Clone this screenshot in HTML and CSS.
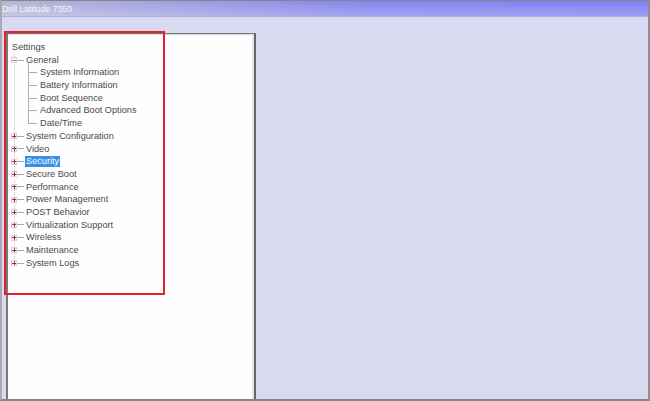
FILE: index.html
```html
<!DOCTYPE html>
<html>
<head>
<meta charset="utf-8">
<link rel="stylesheet" href="styles.css">
</head>
<body>
<div class="window">
  <div class="titlebar"><span class="title">Dell Latitude 7350</span></div>
  <div class="main">
    <div class="panel">
      <div class="tree">
        <div class="root">Settings</div>
        <div class="nodes">
          <div class="node open">
            <div class="row"><span class="box minus"></span><span class="hline"></span><span class="label">General</span></div>
            <div class="children">
              <div class="child"><span class="stub"></span><span class="label">System Information</span></div>
              <div class="child"><span class="stub"></span><span class="label">Battery Information</span></div>
              <div class="child"><span class="stub"></span><span class="label">Boot Sequence</span></div>
              <div class="child"><span class="stub"></span><span class="label">Advanced Boot Options</span></div>
              <div class="child last"><span class="stub"></span><span class="label">Date/Time</span></div>
            </div>
          </div>
          <div class="row"><span class="box"></span><span class="hline"></span><span class="label">System Configuration</span></div>
          <div class="row"><span class="box"></span><span class="hline"></span><span class="label">Video</span></div>
          <div class="row"><span class="box"></span><span class="hline"></span><span class="label selected">Security</span></div>
          <div class="row"><span class="box"></span><span class="hline"></span><span class="label">Secure Boot</span></div>
          <div class="row"><span class="box"></span><span class="hline"></span><span class="label">Performance</span></div>
          <div class="row"><span class="box"></span><span class="hline"></span><span class="label">Power Management</span></div>
          <div class="row"><span class="box"></span><span class="hline"></span><span class="label">POST Behavior</span></div>
          <div class="row"><span class="box"></span><span class="hline"></span><span class="label">Virtualization Support</span></div>
          <div class="row"><span class="box"></span><span class="hline"></span><span class="label">Wireless</span></div>
          <div class="row"><span class="box"></span><span class="hline"></span><span class="label">Maintenance</span></div>
          <div class="row"><span class="box"></span><span class="hline"></span><span class="label">System Logs</span></div>
        </div>
      </div>
    </div>
  </div>
  <div class="annotation"></div>
</div>
</body>
</html>
```
FILE: styles.css
```css
* { box-sizing: border-box; }
html, body { margin: 0; padding: 0; }
body {
  width: 650px;
  height: 401px;
  overflow: hidden;
  background: #808080;
  font-family: "Liberation Sans", Arial, sans-serif;
}
.window {
  position: relative;
  width: 650px;
  height: 401px;
  border-top: 1px solid #858585;
  border-left: 2px solid #a9a9b4;
  border-right: 2px solid #8c8c94;
  border-bottom: 2px solid #84848a;
  background: #d8dbef;
  display: flex;
  flex-direction: column;
}
.titlebar {
  height: 16px;
  flex: none;
  background:
    linear-gradient(to bottom, rgba(255,255,255,0) 0%, rgba(255,255,255,0.25) 100%),
    linear-gradient(to right, #b6b6d8 0%, #a0a0e2 25%, #8585ef 55%, #7e7ef4 100%);
  border-bottom: 1px solid #aeb0e6;
  display: flex;
  align-items: center;
}
.title {
  color: #ffffff;
  font-size: 8.7px;
  opacity: 0.9;
}
.main {
  flex: 1;
  display: flex;
  padding: 16px 0 0 4px;
}
.panel {
  width: 250px;
  background: #fefeff;
  border-top: 1px solid #77777e;
  border-left: 2px solid #77777e;
  border-right: 2px solid #66666c;
  box-shadow: inset -2px 0 0 #e4e4ea, inset 0 1px 0 #d8d8de;
}
.tree {
  padding: 7px 0 0 4px;
  font-size: 9.2px;
  line-height: 12.7px;
  color: #4a4a4a;
}
.root { height: 12.7px; }
.nodes {
  position: relative;
}
.nodes::before {
  content: "";
  position: absolute;
  left: 2px;
  top: 0;
  bottom: 6px;
  border-left: 1px dotted #c8c8cc;
}
.row, .child {
  height: 12.7px;
  display: flex;
  align-items: center;
  white-space: nowrap;
}
.box {
  position: relative;
  width: 6px;
  height: 6px;
  flex: none;
  margin-left: -1px;
  background: #fbf5f8;
  border: 1px solid #e2c9d6;
}
.box::before, .box::after {
  content: "";
  position: absolute;
  background: #8e2f60;
}
.box::before { left: 0; top: 1.5px; width: 4px; height: 1px; }
.box::after { left: 1.5px; top: 0; width: 1px; height: 4px; }
.box.minus::after { display: none; }
.box.minus::before { background: #d07aa0; }
.hline {
  width: 7px;
  height: 1px;
  flex: none;
  background: #a8a8ac;
  margin-right: 2px;
}
.label { display: inline-block; }
.selected {
  background: #3a8ee8;
  color: #ffffff;
  padding: 0 1px;
  margin-left: -1px;
  line-height: 11px;
}
.children {
  margin-left: 16px;
  position: relative;
}
.children::before {
  content: "";
  position: absolute;
  left: 0;
  top: -3px;
  height: calc(100% - 3px);
  border-left: 1px solid #b0b0b4;
}
.stub {
  width: 9px;
  height: 1px;
  flex: none;
  background: #a8a8ac;
  margin-right: 3px;
}
.annotation {
  position: absolute;
  left: 2px;
  top: 30px;
  width: 161px;
  height: 264px;
  border: 2px solid #e3222b;
  pointer-events: none;
}
```
